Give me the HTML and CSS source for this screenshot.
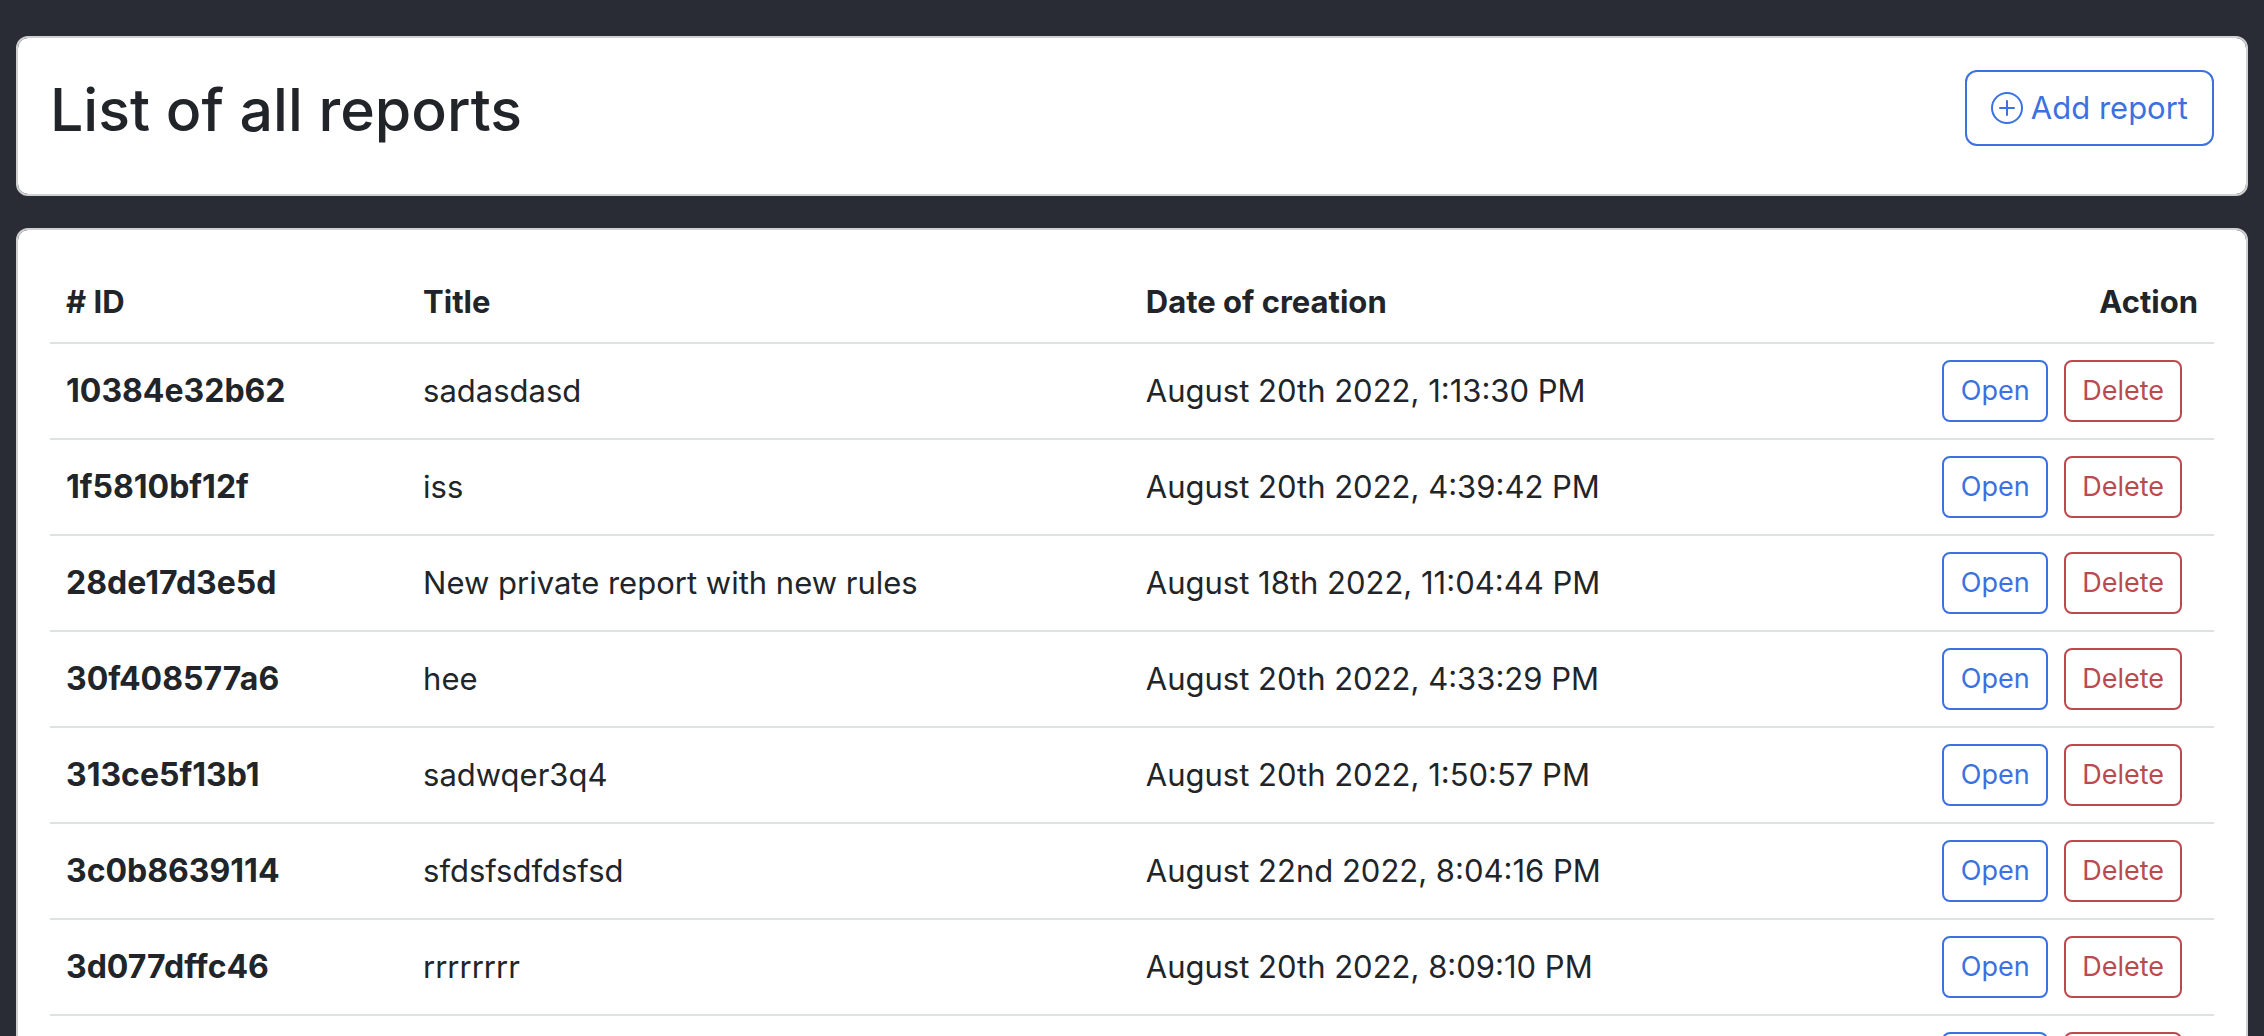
FILE: index.html
```html
<!DOCTYPE html>
<html lang="en">
<head>
<meta charset="utf-8">
<meta name="viewport" content="width=device-width, initial-scale=1">
<title>List of all reports</title>
<link rel="stylesheet" href="styles.css">
</head>
<body>
<main class="page">
  <header class="card card-header">
    <h1 class="title">List of all reports</h1>
    <button type="button" class="btn btn-primary btn-large">
      <svg class="icon" viewBox="0 0 16 16" fill="currentColor" aria-hidden="true">
        <path d="M8 15A7 7 0 1 1 8 1a7 7 0 0 1 0 14zm0 1A8 8 0 1 0 8 0a8 8 0 0 0 0 16z"/>
        <path d="M8 4a.5.5 0 0 1 .5.5v3h3a.5.5 0 0 1 0 1h-3v3a.5.5 0 0 1-1 0v-3h-3a.5.5 0 0 1 0-1h3v-3A.5.5 0 0 1 8 4z"/>
      </svg>
      Add report
    </button>
  </header>
  <section class="card">
    <table class="table">
      <colgroup>
        <col class="col-id">
        <col class="col-title">
        <col class="col-date">
        <col class="col-action">
      </colgroup>
      <thead>
        <tr><th scope="col"># ID</th><th scope="col">Title</th><th scope="col">Date of creation</th><th scope="col" class="action-head">Action</th></tr>
      </thead>
      <tbody>
        <tr><th scope="row">10384e32b62</th><td>sadasdasd</td><td>August 20th 2022, 1:13:30 PM</td><td><div class="actions"><button type="button" class="btn btn-primary">Open</button><button type="button" class="btn btn-danger">Delete</button></div></td></tr>
        <tr><th scope="row">1f5810bf12f</th><td>iss</td><td>August 20th 2022, 4:39:42 PM</td><td><div class="actions"><button type="button" class="btn btn-primary">Open</button><button type="button" class="btn btn-danger">Delete</button></div></td></tr>
        <tr><th scope="row">28de17d3e5d</th><td>New private report with new rules</td><td>August 18th 2022, 11:04:44 PM</td><td><div class="actions"><button type="button" class="btn btn-primary">Open</button><button type="button" class="btn btn-danger">Delete</button></div></td></tr>
        <tr><th scope="row">30f408577a6</th><td>hee</td><td>August 20th 2022, 4:33:29 PM</td><td><div class="actions"><button type="button" class="btn btn-primary">Open</button><button type="button" class="btn btn-danger">Delete</button></div></td></tr>
        <tr><th scope="row">313ce5f13b1</th><td>sadwqer3q4</td><td>August 20th 2022, 1:50:57 PM</td><td><div class="actions"><button type="button" class="btn btn-primary">Open</button><button type="button" class="btn btn-danger">Delete</button></div></td></tr>
        <tr><th scope="row">3c0b8639114</th><td>sfdsfsdfdsfsd</td><td>August 22nd 2022, 8:04:16 PM</td><td><div class="actions"><button type="button" class="btn btn-primary">Open</button><button type="button" class="btn btn-danger">Delete</button></div></td></tr>
        <tr><th scope="row">3d077dffc46</th><td>rrrrrrrr</td><td>August 20th 2022, 8:09:10 PM</td><td><div class="actions"><button type="button" class="btn btn-primary">Open</button><button type="button" class="btn btn-danger">Delete</button></div></td></tr>
        <tr><th scope="row"></th><td></td><td></td><td><div class="actions"><button type="button" class="btn btn-primary">Open</button><button type="button" class="btn btn-danger">Delete</button></div></td></tr>
      </tbody>
    </table>
  </section>
</main>
</body>
</html>
```
FILE: styles.css
```css
* {
  box-sizing: border-box;
}

body {
  margin: 0;
  background: #292c34;
  color: #212529;
  font-family: Inter, "Liberation Sans", sans-serif;
  font-size: 31px;
  line-height: 48px;
}

.page {
  display: flex;
  flex-direction: column;
  gap: 32px;
  height: 100vh;
  padding: 36px 16px 0;
  overflow: hidden;
}

.card {
  flex: none;
  padding: 32px;
  background: #fff;
  background-clip: padding-box;
  border: 2px solid #cfd0d2;
  border-radius: 12px;
}

.card-header {
  display: flex;
  align-items: flex-start;
  justify-content: space-between;
}

.title {
  margin: 0 0 12px;
  font-size: 59px;
  font-weight: 500;
  line-height: 80px;
}

.btn {
  min-width: 106px;
  padding: 8px 16px;
  background: transparent;
  border: 2px solid;
  border-radius: 8px;
  font-family: inherit;
  font-size: 27px;
  line-height: 42px;
  cursor: pointer;
}

.btn-large {
  display: flex;
  align-items: center;
  gap: 8px;
  padding: 12px 24px;
  border-radius: 12px;
  font-size: 31px;
  line-height: 48px;
}

.btn-primary {
  color: #3b71e0;
}

.btn-danger {
  color: #bb4a50;
}

.icon {
  width: 32px;
  height: 32px;
}

.table {
  width: 100%;
  border-collapse: separate;
  border-spacing: 0;
  table-layout: fixed;
}

.col-id {
  width: 16.5%;
}

.col-title {
  width: 33.4%;
}

.col-date {
  width: 30%;
}

.table th,
.table td {
  padding: 16px;
  border-bottom: 2px solid #dee2e3;
  text-align: left;
  vertical-align: middle;
}

.table tbody th {
  font-size: 32px;
}

.table .action-head {
  text-align: right;
}

.actions {
  display: flex;
  justify-content: flex-end;
  gap: 16px;
  padding-right: 16px;
}
```
